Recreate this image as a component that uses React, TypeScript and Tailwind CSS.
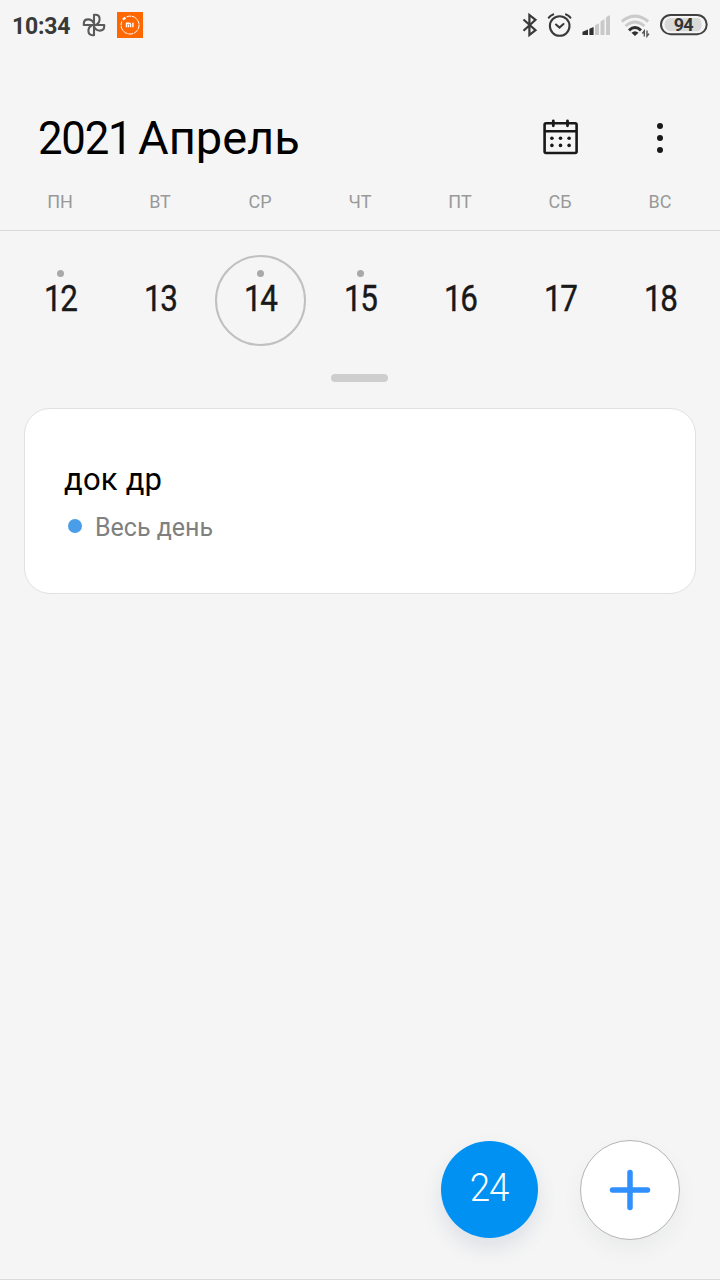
const weekdays = ['ПН', 'ВТ', 'СР', 'ЧТ', 'ПТ', 'СБ', 'ВС'];

const days = [
  { day: '12', event: true, today: false },
  { day: '13', event: false, today: false },
  { day: '14', event: true, today: true },
  { day: '15', event: true, today: false },
  { day: '16', event: false, today: false },
  { day: '17', event: false, today: false },
  { day: '18', event: false, today: false },
];

function PinwheelIcon() {
  const blade = 'M12 12V1.8H13.3C16.2 1.8 17.6 3.9 17.6 6.2C17.6 8.8 16 10.8 13.6 12';
  return (
    <svg className="ml-3 size-6" viewBox="0 0 24 24" fill="none" stroke="#5a5a5a" strokeWidth="2.1" strokeLinejoin="round">
      <path d={blade} />
      <path d={blade} transform="rotate(90 12 12)" />
      <path d={blade} transform="rotate(180 12 12)" />
      <path d={blade} transform="rotate(270 12 12)" />
    </svg>
  );
}

function MiIcon() {
  return (
    <svg className="ml-[11px] h-[26px] w-[26px]" viewBox="0 0 26 26" fill="none">
      <rect width="26" height="26" fill="#ff6700" />
      <path d="M9.5 4.8A9 9 0 1 1 4.8 9.5" stroke="#fff" strokeWidth="1" strokeDasharray="5 .7" />
      <path d="M5.8 7.7L8.4 5.6" stroke="#fff" strokeWidth="2.2" />
      <path d="M9.5 15.2V11.3H12.3Q13.6 11.3 13.6 12.4V15.2M11.5 12.5V15.2M15.9 10.7V15.3" stroke="#fff" strokeWidth="1.4" />
    </svg>
  );
}

function StatusIcons() {
  return (
    <svg className="h-[50px] w-[210px]" viewBox="510 0 210 50" fill="none">
      <path d="M523.5 19.5L535.5 30.2L529.4 35V15L535.5 19.8L523.5 30.8" stroke="#3a3a3a" strokeWidth="2.2" />
      <g stroke="#3a3a3a" strokeWidth="2.1" strokeLinecap="round">
        <circle cx="559.7" cy="26" r="9.8" />
        <path d="M556 24.5L559.5 27.5L563.5 24" />
        <path d="M548.8 17.6Q550.4 15.3 553.2 14.4M570.4 17.6Q568.8 15.3 566 14.4" />
      </g>
      <path d="M582.5 35V31.7L588 29.4V35Z M589.4 35V28.8L593.6 27V35Z" fill="#303030" />
      <path d="M595 35V25.2L599 23.2V35Z M600.5 35V21.5L604.5 19V35Z M606 35V17.3L610 15V35Z" fill="#c9c9c9" />
      <path d="M621.8 21.5Q635 10.7 648.2 21.5" stroke="#cbcbcb" strokeWidth="3" />
      <path d="M625.5 26Q635 18 644.5 26" stroke="#cbcbcb" strokeWidth="2.8" />
      <path d="M629 30.3Q635 24.8 641 30.3" stroke="#303030" strokeWidth="3" />
      <path d="M631.5 32.8Q635 29.8 638.5 32.8L635 36Z" fill="#303030" />
      <path d="M644.3 36.5V30.8L642.3 33.5M647 30.5V36.2L649 33.6" stroke="#555" strokeWidth="1.4" />
      <rect x="661" y="15" width="45.7" height="19.2" rx="9.6" stroke="#414141" strokeWidth="2" />
      <path d="M670 18H698Q701.5 18.5 701.5 24.6T698 31.2H670Q664.5 30 664.5 24.6T670 18Z" fill="#d9d9d9" />
      <text x="683.2" y="31" textAnchor="middle" fill="#333" className="font-['Roboto',sans-serif] text-[18px] font-bold tracking-[-1px]">94</text>
    </svg>
  );
}

function CalendarIcon() {
  return (
    <svg className="-mt-0.5 h-[38px] w-[38px]" viewBox="0 0 38 38" fill="none" stroke="#191919" strokeWidth="2.6">
      <rect x="2.6" y="5.2" width="32" height="29.8" rx="1.5" />
      <path d="M2.6 13.3H34.6" />
      <path d="M11.3 2.8V7.8M25.5 2.8V7.8" strokeWidth="2.8" strokeLinecap="round" />
      <g fill="#191919" stroke="none">
        {[9.9, 18.5, 27.1].map((x) => [20.2, 27.4].map((y) => <circle key={`${x}-${y}`} cx={x} cy={y} r="1.8" />))}
      </g>
    </svg>
  );
}

export default function App() {
  return (
    <div className="relative flex h-[1280px] w-[720px] flex-col overflow-hidden border-b border-[#dadada] bg-[#f5f5f5] font-['Roboto',sans-serif]">
      <div className="flex h-[50px] shrink-0 items-center justify-between">
        <div className="flex items-center pl-3">
          <span className="w-[58px] pt-[3px] text-[23px] leading-[47px] font-bold tracking-[-0.2px] whitespace-nowrap text-[#393939]">10:34</span>
          <PinwheelIcon />
          <MiIcon />
        </div>
        <StatusIcons />
      </div>

      <header className="border-b border-[#dadada] pt-[58px] pb-4">
        <div className="flex h-[60px] items-center justify-between pr-[54px] pl-[37px]">
          <h1 className="flex text-[47px] leading-[60px] font-normal whitespace-nowrap text-black">
            <span className="ml-px w-[100px] origin-left scale-x-[0.93] tracking-[-1.3px]">2021</span>
            <span>Апрель</span>
          </h1>
          <div className="flex items-center gap-[74px]">
            <button aria-label="Календарь"><CalendarIcon /></button>
            <button aria-label="Меню" className="flex w-3 flex-col items-center gap-1.5">
              <span className="size-1.5 rounded-full bg-[#191919]" />
              <span className="size-1.5 rounded-full bg-[#191919]" />
              <span className="size-1.5 rounded-full bg-[#191919]" />
            </button>
          </div>
        </div>
        <div className="grid grid-cols-7 px-[10px] pt-[22px] text-center text-[18px] leading-6 text-[#999]">
          {weekdays.map((w) => <span key={w}>{w}</span>)}
        </div>
      </header>

      <section className="grid grid-cols-7 justify-items-center px-[10px] pt-6">
        {days.map(({ day, event, today }) => (
          <div
            key={day}
            className={`flex h-[91px] w-[91px] flex-col items-center rounded-full border-2 pt-[13px] ${today ? 'border-[#c0c0c0]' : 'border-transparent'}`}
          >
            <span className={`h-[7px] w-[7px] rounded-full ${event ? 'bg-[#a9a9a9]' : 'bg-transparent'}`} />
            <span className="mt-[3px] scale-x-[0.85] text-[37px] leading-[37px] tracking-[-1.5px] text-[#191919] [-webkit-text-stroke:0.4px_#191919]">{day}</span>
          </div>
        ))}
      </section>
      <div className="mt-7 ml-[331px] h-2 w-[57px] rounded-full bg-[#cecece]" />

      <article className="mx-6 mt-[26px] h-[186px] rounded-[26px] border border-[#e1e1e1] bg-white pt-[51px] pl-[39px]">
        <h2 className="text-[31px] leading-10 tracking-[0.2px] text-black">док др</h2>
        <div className="mt-[9px] flex items-center pl-1 text-[25px] leading-[38px] text-[#808080]">
          <span className="mr-[13px] mb-1 h-[14px] w-[14px] rounded-full bg-[#4a9ee9]" />
          Весь день
        </div>
      </article>

      <div className="mt-auto mr-10 mb-[39px] flex items-start justify-end gap-[42px]">
        <button className="mt-px h-[97px] w-[97px] rounded-full bg-[#0091f2] text-[39px] leading-[93px] font-light text-white shadow-[0_10px_20px_rgba(70,100,140,0.14)]">
          <span className="block scale-x-[0.94] pr-px pb-0.5 tracking-[-1.2px]">24</span>
        </button>
        <button aria-label="Добавить" className="flex size-[100px] items-center justify-center rounded-full border border-[#b4b4b4] bg-white shadow-[0_10px_20px_rgba(70,90,110,0.06)]">
          <svg className="size-[42px]" viewBox="0 0 42 42" stroke="#3090ff" strokeWidth="5.5" strokeLinecap="round">
            <path d="M21 3.5V38.5M3.5 21H38.5" />
          </svg>
        </button>
      </div>
    </div>
  );
}
